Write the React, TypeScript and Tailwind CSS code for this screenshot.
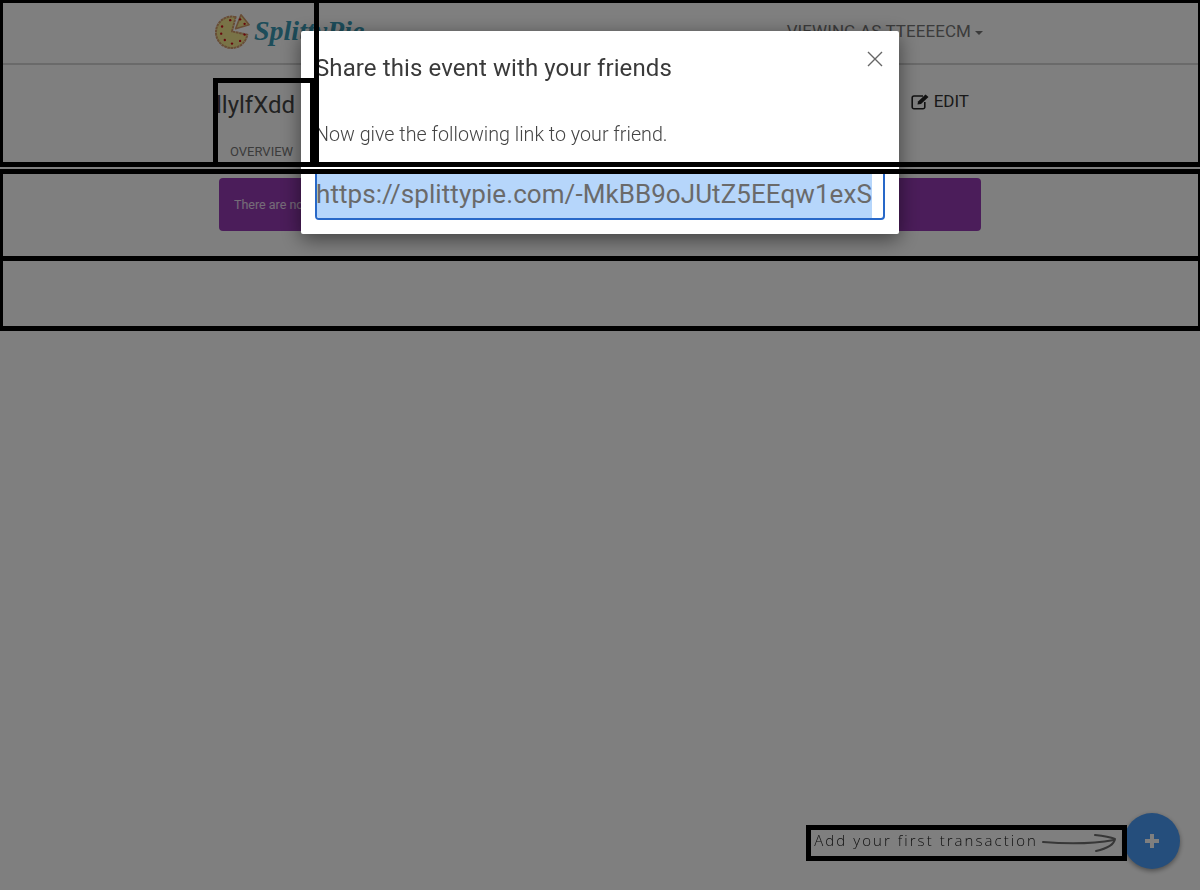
import React from "react";

const roboto = "font-['Roboto',sans-serif]";

function Pizza() {
  const toppings = [
    [9, 15], [8, 23], [12, 30], [20, 34], [29, 31], [34, 24], [29, 7], [18, 8], [34, 12],
  ];
  return (
    <svg width="36" height="36" viewBox="0 0 40 40" className="shrink-0">
      <path d="M24 4.5 A17.5 17.5 0 1 0 37 24 L20 20.5 Z" fill="#f3e78f" stroke="#d09a6a" strokeWidth="2.2" strokeLinejoin="round" strokeDasharray="3 0.6" />
      <path d="M30 2 L39 13 L24 17.5 Z" fill="#f3e78f" stroke="#d09a6a" strokeWidth="1.8" strokeLinejoin="round" />
      {toppings.map(([x, y], i) => (
        <circle key={i} cx={x} cy={y} r="1.3" fill="#d0101c" />
      ))}
    </svg>
  );
}

function Arrow() {
  return (
    <svg width="76" height="22" viewBox="0 0 76 22" fill="none" stroke="#6e6e6e" strokeWidth="2" strokeLinecap="round" strokeLinejoin="round" className="shrink-0">
      <path d="M1 10 C 25 12 50 12 72 8" />
      <path d="M53 3 C 62 4 68 5 73 7 C 72 13 63 17 54 19" />
    </svg>
  );
}

export default function App() {
  return (
    <div className={`relative h-[890px] w-full overflow-hidden bg-white ${roboto}`}>
      <header className="h-[65px] border-b-2 border-b-[#d4d4d4]">
        <div className="mx-auto flex h-full w-[770px] items-center justify-between pr-[2px]">
          <div className="-ml-[1px] flex items-center gap-[4px] pb-[1px]">
            <Pizza />
            <span className="font-['Liberation_Serif',serif] text-[28px] font-bold italic leading-none text-[#3a9ab5]">
              SplittyPie
            </span>
          </div>
          <div className="flex items-center gap-[4px] text-[17px] tracking-[0.08px] text-[#777]">
            VIEWING AS TTEEEECM
            <span className="mt-[2px] border-x-[4.5px] border-t-[4.5px] border-x-transparent border-t-[#777]" />
          </div>
        </div>
      </header>

      <div className="mx-auto w-[762px]">
        <div className="flex h-[105px] items-start justify-between">
          <div className="flex flex-col pt-[26px]">
            <div className="-ml-[3px] text-[24px] leading-[28px] text-[#444]">llylfXdd</div>
            <div className="ml-[11px] mt-[25px] text-[13px] leading-[15px] text-[#777]">OVERVIEW</div>
          </div>
          <div className="mr-[12px] mt-[26px] flex items-center gap-[4px] text-[17px] leading-[20px] text-[#333]">
            <svg width="19" height="17" viewBox="0 0 19 17" fill="none" stroke="#222" strokeWidth="1.6">
              <path d="M12 3 H3 A1.8 1.8 0 0 0 1.2 4.8 V14 A1.8 1.8 0 0 0 3 15.8 H12 A1.8 1.8 0 0 0 13.8 14 V9" />
              <path d="M6.5 11.5 L7 8.5 L14.5 1.5 L17.5 4 L10 11 Z" fill="#222" stroke="none" />
            </svg>
            EDIT
          </div>
        </div>
        <div className="mt-[8px] flex h-[53px] items-center rounded bg-[#963ab4] px-[15px] pt-[1px] text-[12.5px] text-white/80">
          <span className="w-[67px] overflow-hidden whitespace-nowrap">There are no transactions yet.</span>
        </div>
      </div>

      <div className="fixed bottom-[29px] right-[82px] flex h-[36px] items-center gap-[4px]">
        <span className="pb-[5px] font-['Open_Sans',sans-serif] text-[15px] font-light tracking-[2.05px] text-[#222] whitespace-nowrap">
          Add your first transaction
        </span>
        <Arrow />
      </div>
      <button className="fixed bottom-[21px] right-[20px] flex h-[56px] w-[56px] items-center justify-center rounded-full bg-[#4a9cf8] shadow-[0_2px_5px_rgba(0,0,0,0.4)]">
        <svg width="14" height="14" viewBox="0 0 14 14"><path d="M5 0 H9 V5 H14 V9 H9 V14 H5 V9 H0 V5 H5 Z" fill="#fff" /></svg>
      </button>

      <div className="fixed inset-0 bg-black/50" />

      <div className="fixed left-[301px] top-[31px] flex h-[203px] w-[598px] flex-col rounded-[2px] bg-white px-[14px] shadow-[0_5px_20px_rgba(0,0,0,0.5)]">
        <div className="flex items-start justify-between pt-[22px]">
          <h2 className="text-[24px] tracking-[0.1px] leading-[30px] text-[#3a3a3a]">Share this event with your friends</h2>
          <svg width="16" height="16" viewBox="0 0 16 16" stroke="#666" strokeWidth="1.4" className="mr-[2px] -mt-[2px]">
            <path d="M1 1 L15 15 M15 1 L1 15" />
          </svg>
        </div>
        <p className="mt-[40px] text-[19.7px] font-light leading-[24px] text-[#444]">Now give the following link to your friend.</p>
        <div className="mt-[22px] flex h-[51px] items-center overflow-hidden rounded border-2 border-[#2868c8] pr-[10px] text-[26px] tracking-[0.07px] text-[#6a6a6a]">
          <span className="flex h-full items-center whitespace-nowrap bg-[#b6d6fb] pb-[1px] -ml-[1px]">https://splittypie.com/-MkBB9oJUtZ5EEqw1exS</span>
        </div>
      </div>

      <div className="fixed left-0 top-0 h-[167px] w-[1200px] border-b-[5px] border-l-[3px] border-r-[2px] border-t-[3px] border-black" />
      <div className="fixed left-0 top-[169px] h-[92px] w-[1200px] border-[5px] border-l-[3px] border-r-[2px] border-black" />
      <div className="fixed left-0 top-[256px] h-[75px] w-[1200px] border-[5px] border-l-[3px] border-r-[2px] border-black" />
      <div className="fixed left-[213px] top-[78px] h-[89px] w-[102px] border-[5px] border-black" />
      <div className="fixed left-[314px] top-0 h-[167px] w-[5px] bg-black" />
      <div className="fixed left-[806px] top-[825px] h-[36px] w-[321px] border-[5px] border-black" />
    </div>
  );
}
